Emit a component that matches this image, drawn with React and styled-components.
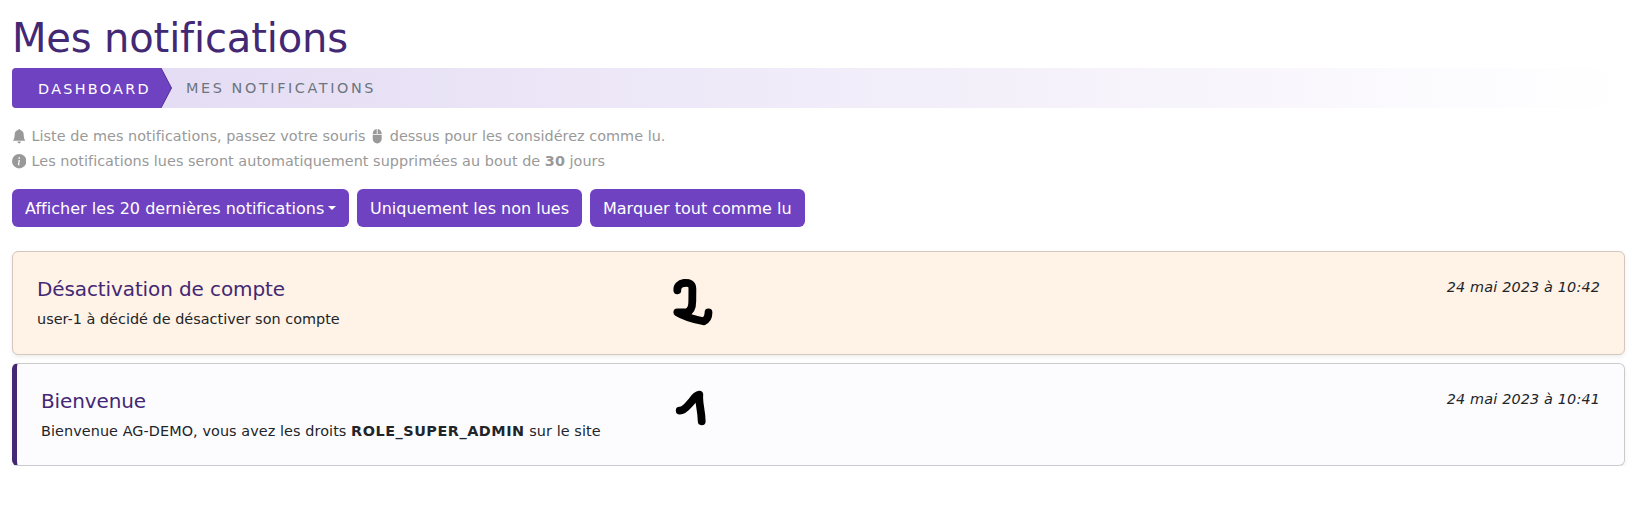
import React from "react";
import styled, { createGlobalStyle, css } from "styled-components";
import { BsBellFill, BsInfoCircleFill, BsMouse2Fill } from "react-icons/bs";

const GlobalStyle = createGlobalStyle`
  *, *::before, *::after { box-sizing: border-box; }
  body {
    margin: 0;
    background: #fff;
    color: #212529;
    font-family: Verdana, "DejaVu Sans", sans-serif;
    font-size: 16px;
    font-variant-ligatures: none;
  }
`;

const Page = styled.main`
  padding: 14px 16px 0 12px;
`;

const Title = styled.h1`
  margin: 0 0 6px;
  color: #432874;
  font-size: 40px;
  font-weight: 400;
  line-height: 48px;
  letter-spacing: -0.15px;
`;

const Breadcrumb = styled.nav`
  display: flex;
  height: 40px;
  border-radius: 4px;
  overflow: hidden;
  background: linear-gradient(90deg, #e2d9f3, #fff);
  font-size: 14.4px;
  line-height: 40px;
  text-transform: uppercase;
`;

const HomeCrumb = styled.a`
  width: 149px;
  padding: 1px 0 0 26px;
  background: #6f42c1;
  color: #fff;
  letter-spacing: 2.3px;
  white-space: nowrap;
`;

const Chevron = styled.svg`
  display: block;
  width: 12px;
  height: 40px;
`;

const CurrentCrumb = styled.span`
  padding-left: 13px;
  color: #6c757d;
  letter-spacing: 2.6px;
`;

const Intro = styled.p`
  margin: 16px 0 0;
  color: #999;
  font-size: 14.4px;
  line-height: 25px;
  letter-spacing: 0.035px;
`;

const IntroLine = styled.span`
  display: flex;
  align-items: center;
  white-space: pre;

  svg { flex: none; font-size: 14.4px; }
`;

const IconSlot = styled.span`
  display: flex;
  justify-content: center;
  width: ${(p) => p.$width}px;
  margin: 0 ${(p) => p.$right}px 0 ${(p) => p.$left || 0}px;
`;

const Toolbar = styled.div`
  display: flex;
  gap: 8px;
  margin-top: 15px;
`;

const Button = styled.button`
  display: flex;
  align-items: center;
  width: ${(p) => p.$width}px;
  height: 38px;
  padding: 0 0 0 13px;
  border: 0;
  border-radius: 6px;
  background: #6f42c1;
  color: #fff;
  font: inherit;
  letter-spacing: ${(p) => p.$tracking || 0}px;
  white-space: nowrap;
`;

const Caret = styled.span`
  margin-left: 4px;
  border-top: 4.8px solid;
  border-right: 4.8px solid transparent;
  border-left: 4.8px solid transparent;
`;

const List = styled.section`
  display: flex;
  flex-direction: column;
  gap: 8px;
  margin-top: 24px;
`;

const Card = styled.article`
  position: relative;
  display: flex;
  justify-content: space-between;
  height: 104px;
  padding: 24px 24px 0 24px;
  border: 1px solid #d3c7be;
  border-radius: 6px;
  background: #fff2e6;
  box-shadow: 0 2px 4px rgba(0, 0, 0, 0.075);
  ${(p) =>
    p.$read &&
    css`
      height: 103px;
      border-color: #cacbce;
      border-left: 5px solid #432874;
      background: #fcfcff;
    `}
`;

const CardTitle = styled.h2`
  margin: 0 0 6px;
  color: #432874;
  font-size: 20px;
  font-weight: 400;
  line-height: 26px;
  letter-spacing: -0.11px;
`;

const CardText = styled.p`
  margin: 0;
  font-size: 14.4px;
  line-height: 22px;
  letter-spacing: ${(p) => p.$tracking}px;

  b { letter-spacing: 0.53px; }
`;

const CardDate = styled.time`
  font-size: 14.4px;
  font-style: italic;
  line-height: 22px;
  letter-spacing: 0.15px;
`;

const Mark = styled.svg`
  position: absolute;
  left: ${(p) => p.$left}px;
  top: 19px;
  width: 60px;
  height: 60px;
  fill: none;
  stroke: #000;
  stroke-width: 7.8;
  stroke-linecap: round;
  stroke-linejoin: round;
`;

export default function App() {
  return (
    <>
      <GlobalStyle />
      <Page>
        <Title>Mes notifications</Title>
        <Breadcrumb>
          <HomeCrumb>Dashboard</HomeCrumb>
          <Chevron viewBox="0 0 12 40">
            <path d="M0 0L10.500 20L0 40Z" fill="#6f42c1" />
            <path d="M0 0L10.500 20L0 40" fill="none" stroke="#53318f" />
          </Chevron>
          <CurrentCrumb>Mes notifications</CurrentCrumb>
        </Breadcrumb>
        <Intro>
          <IntroLine>
            <IconSlot $width={14} $right={5.5}><BsBellFill /></IconSlot>
            <span>Liste de mes notifications, passez votre souris</span>
            <IconSlot $width={14} $left={5} $right={5.2}><BsMouse2Fill /></IconSlot>
            <span>dessus pour les considérez comme lu.</span>
          </IntroLine>
          <IntroLine>
            <IconSlot $width={14} $right={5.5}><BsInfoCircleFill /></IconSlot>
            <span>Les notifications lues seront automatiquement supprimées au bout de <b>30</b> jours</span>
          </IntroLine>
        </Intro>
        <Toolbar>
          <Button $width={337} $tracking={0.03}>Afficher les 20 dernières notifications<Caret /></Button>
          <Button $width={225}>Uniquement les non lues</Button>
          <Button $width={215}>Marquer tout comme lu</Button>
        </Toolbar>
        <List>
          <Card>
            <div>
              <CardTitle>Désactivation de compte</CardTitle>
              <CardText $tracking={0.02}>user-1 à décidé de désactiver son compte</CardText>
            </div>
            <Mark $left={657} viewBox="0 0 60 60">
              <path d="M7.300 19.300C7 15.500 9.500 12.500 14 12C19 11.500 22.500 12.500 22.400 18L22.300 30C22.300 36 21 40 17 41.300H7.300C15 46 25 48.500 33.500 50.300C36.500 49 38.500 45.500 38.500 41.500" />
            </Mark>
            <CardDate>24 mai 2023 à 10:42</CardDate>
          </Card>
          <Card $read>
            <div>
              <CardTitle>Bienvenue</CardTitle>
              <CardText $tracking={0.08}>Bienvenue AG-DEMO, vous avez les droits <b>ROLE_SUPER_ADMIN</b> sur le site</CardText>
            </div>
            <Mark $left={653} viewBox="0 0 60 60">
              <path d="M9.700 27.700C15 27.500 18 22 22 18C24 15 26 12 29.300 11.700C28.500 21 31.500 26 31.700 38.300" />
            </Mark>
            <CardDate>24 mai 2023 à 10:41</CardDate>
          </Card>
        </List>
      </Page>
    </>
  );
}
